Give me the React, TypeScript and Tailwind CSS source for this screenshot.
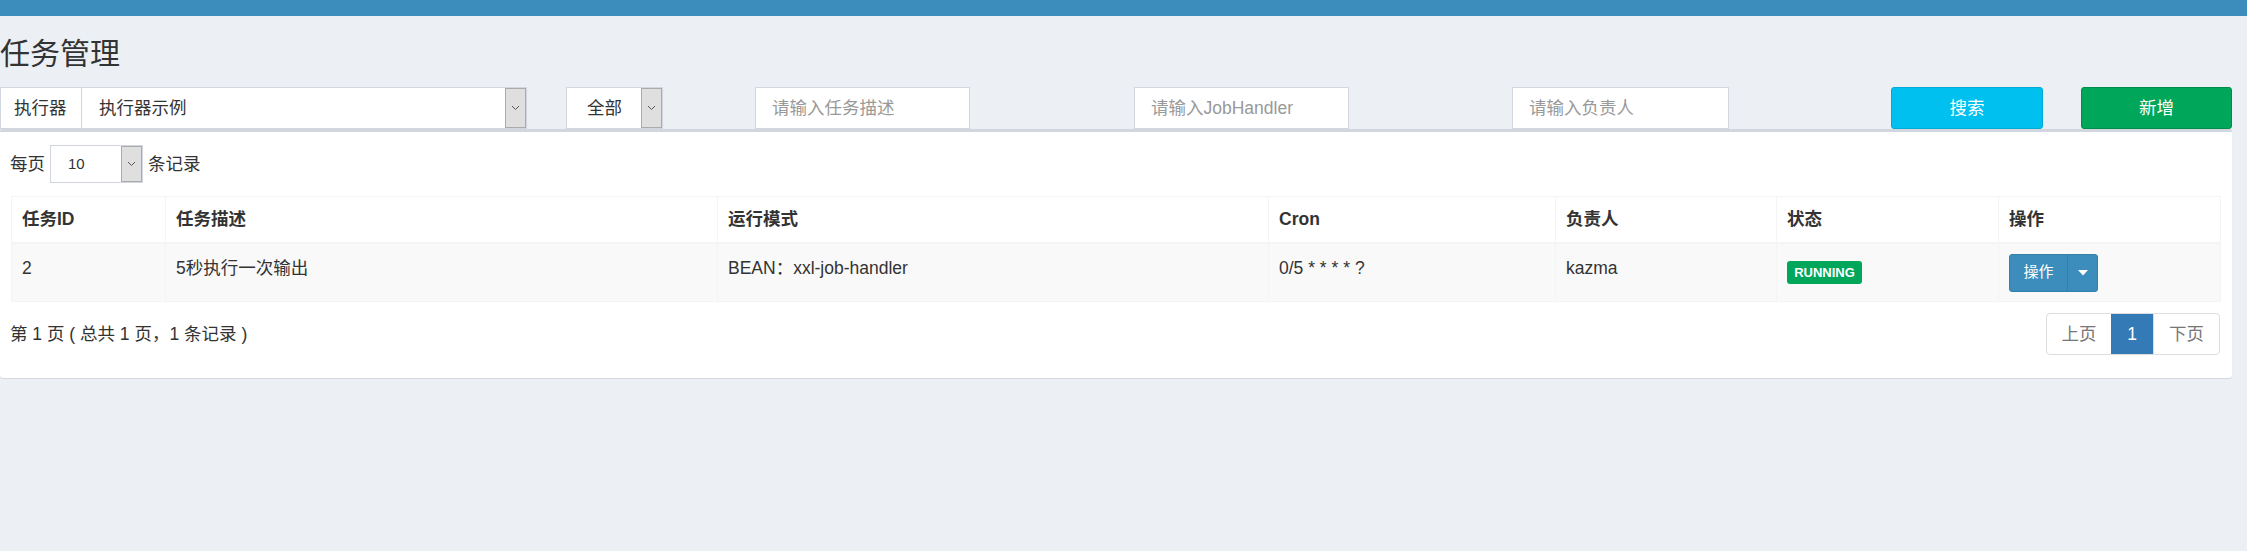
import React from 'react';

const font = { fontFamily: '"Liberation Sans", "Noto Sans CJK SC", sans-serif' };

const Chevron = () => (
  <svg width="9" height="6" viewBox="0 0 9 6" fill="none">
    <polyline points="1,1 4.5,4.5 8,1" stroke="#555" strokeWidth="1" />
  </svg>
);

const SelectBox = ({ text, className, textPad }: { text: string; className: string; textPad: string }) => (
  <div className={`flex h-full items-center border border-[#d2d6de] bg-white ${className}`}>
    <span className={`flex-1 ${textPad} text-[#333]`}>{text}</span>
    <div className="flex h-full w-[21px] items-center justify-center border border-[#ababab] bg-[#dfdfdf]">
      <Chevron />
    </div>
  </div>
);

const columns = [
  { title: '任务ID', width: 154 },
  { title: '任务描述', width: 552 },
  { title: '运行模式', width: 551 },
  { title: 'Cron', width: 287 },
  { title: '负责人', width: 221 },
  { title: '状态', width: 222 },
  { title: '操作', width: 222 },
];

export default function App() {
  return (
    <div className="min-h-screen bg-[#ecf0f5] text-[17.5px] text-[#333]" style={font}>
      <div className="h-4 bg-[#3c8dbc]" />

      <h1 className="mt-[21px] h-[33px] text-[30px] leading-[33px] font-normal text-[#333]">任务管理</h1>

      {/* filters */}
      <div className="mt-[17px] flex h-[42px] items-stretch">
        <div className="flex w-[527px]">
          <div className="flex w-[82px] items-center border border-[#d2d6de] bg-white pl-[13px]">执行器</div>
          <SelectBox text="执行器示例" className="flex-1 border-l-0" textPad="pl-[17px]" />
        </div>
        <SelectBox text="全部" className="ml-[39px] w-[97px]" textPad="pl-[20px]" />
        <div className="ml-[92px] flex w-[215px] items-center border border-[#d2d6de] bg-white pl-[16px] text-[#999]">请输入任务描述</div>
        <div className="ml-[164px] flex w-[215px] items-center border border-[#d2d6de] bg-white pl-[16px] text-[#999]">请输入JobHandler</div>
        <div className="ml-[163px] flex w-[217px] items-center border border-[#d2d6de] bg-white pl-[16px] text-[#999]">请输入负责人</div>
        <button className="ml-[162px] w-[152px] rounded-[3px] border border-[#00acd6] bg-[#00c0ef] text-white">搜索</button>
        <button className="ml-[38px] w-[151px] rounded-[3px] border border-[#008d4c] bg-[#00a65a] text-white">新增</button>
      </div>

      {/* box */}
      <div className="mr-[15px] rounded-[3px] border-t-[3px] border-[#d2d6de] bg-white pt-[13px] pr-[12px] pb-[23px] pl-[10px] shadow-[0_1px_1px_rgba(0,0,0,0.1)]">
        <div className="flex h-[38px] items-center">
          <span>每页</span>
          <SelectBox text="10" className="ml-[5px] w-[93px] text-[15px]" textPad="pl-[17px]" />
          <span className="ml-[5px]">条记录</span>
        </div>

        <table className="mt-[13px] ml-px table-fixed border-collapse border border-[#f4f4f4]" style={{ width: 2209 }}>
          <colgroup>
            {columns.map((c) => (
              <col key={c.title} style={{ width: c.width }} />
            ))}
          </colgroup>
          <thead>
            <tr className="border-b-2 border-[#f4f4f4]">
              {columns.map((c) => (
                <th key={c.title} className="h-[46px] border border-[#f4f4f4] px-[10px] text-left align-middle font-bold">
                  {c.title}
                </th>
              ))}
            </tr>
          </thead>
          <tbody>
            <tr className="bg-[#f9f9f9]">
              <td className="h-[59px] border border-[#f4f4f4] px-[10px] pt-[12px] align-top leading-[25px]">2</td>
              <td className="border border-[#f4f4f4] px-[10px] pt-[12px] align-top leading-[25px]">5秒执行一次输出</td>
              <td className="border border-[#f4f4f4] px-[10px] pt-[12px] align-top leading-[25px]">BEAN：xxl-job-handler</td>
              <td className="border border-[#f4f4f4] px-[10px] pt-[12px] align-top leading-[25px]">0/5 * * * * ?</td>
              <td className="border border-[#f4f4f4] px-[10px] pt-[12px] align-top leading-[25px]">kazma</td>
              <td className="border border-[#f4f4f4] px-[10px] pt-[14px] align-top">
                <span className="inline-flex h-[23px] w-[75px] items-center justify-center rounded-[3px] bg-[#00a65a] text-[13px] font-bold text-white">
                  RUNNING
                </span>
              </td>
              <td className="border border-[#f4f4f4] px-[10px] pt-[10px] align-top">
                <div className="inline-flex h-[38px] overflow-hidden rounded-[3px] border border-[#367fa9] bg-[#3c8dbc] text-white">
                  <span className="flex w-[57px] items-center justify-center text-[15px]">操作</span>
                  <span className="flex w-[30px] items-center justify-center border-l border-[#367fa9]">
                    <svg width="10" height="6" viewBox="0 0 10 6">
                      <polygon points="0,0 10,0 5,5.5" fill="#fff" />
                    </svg>
                  </span>
                </div>
              </td>
            </tr>
          </tbody>
        </table>

        <div className="mt-[11px] flex items-center justify-between">
          <span>第 1 页 ( 总共 1 页，1 条记录 )</span>
          <div className="flex h-[42px] overflow-hidden rounded-[4px] border border-[#ddd]">
            <span className="flex w-[64px] items-center justify-center text-[#777]">上页</span>
            <span className="flex w-[42px] items-center justify-center bg-[#337ab7] text-white">1</span>
            <span className="flex w-[66px] items-center justify-center border-l border-[#ddd] text-[#777]">下页</span>
          </div>
        </div>
      </div>
    </div>
  );
}
